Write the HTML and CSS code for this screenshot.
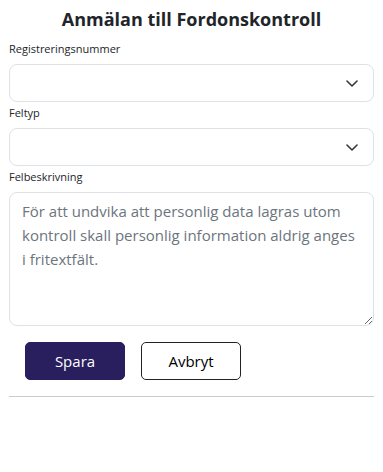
FILE: index.html
```html
<!DOCTYPE html>
<html lang="sv">
<head>
  <meta charset="UTF-8">
  <meta name="viewport" content="width=device-width, initial-scale=1.0">
  <title>Anmälan till Fordonskontroll</title>
  <link rel="stylesheet" href="styles.css">
</head>
<body>
  <form class="report-form">
    <h1>Anmälan till Fordonskontroll</h1>

    <label for="regnr">Registreringsnummer</label>
    <div class="select-wrap">
      <select id="regnr"><option></option></select>
      <svg class="chevron" viewBox="0 0 12 7" width="12" height="7"><path d="M1 1l5 5 5-5" fill="none" stroke="#343a40" stroke-width="1.6" stroke-linecap="round" stroke-linejoin="round"/></svg>
    </div>

    <label for="feltyp">Feltyp</label>
    <div class="select-wrap">
      <select id="feltyp"><option></option></select>
      <svg class="chevron" viewBox="0 0 12 7" width="12" height="7"><path d="M1 1l5 5 5-5" fill="none" stroke="#343a40" stroke-width="1.6" stroke-linecap="round" stroke-linejoin="round"/></svg>
    </div>

    <label for="beskrivning">Felbeskrivning</label>
    <textarea id="beskrivning" placeholder="För att undvika att personlig data lagras utom kontroll skall personlig information aldrig anges i fritextfält."></textarea>

    <div class="actions">
      <button type="button" class="btn btn-primary">Spara</button>
      <button type="button" class="btn btn-outline">Avbryt</button>
    </div>

    <hr>
  </form>
</body>
</html>
```

FILE: styles.css
```css
:root {
  --primary: #291e5e;
  --border: #dee2e6;
  --text: #212529;
  --muted: #6c757d;
}

* {
  box-sizing: border-box;
}

body {
  margin: 0;
  padding: 7px 9px;
  font-family: 'Open Sans', 'Noto Sans', sans-serif;
  color: var(--text);
  background: #fff;
}

.report-form {
  display: flex;
  flex-direction: column;
}

h1 {
  margin: 0 0 10px;
  font-size: 18px;
  line-height: 24px;
  font-weight: 700;
  text-align: center;
}

label {
  font-size: 11px;
  line-height: 16px;
  margin-bottom: 7px;
}

.select-wrap {
  position: relative;
  margin-bottom: 3px;
}

select {
  display: block;
  width: 100%;
  height: 38px;
  border: 1px solid var(--border);
  border-radius: 8px;
  background: #fff;
  appearance: none;
  -webkit-appearance: none;
  font: inherit;
}

.chevron {
  position: absolute;
  right: 16px;
  top: 16px;
  pointer-events: none;
}

textarea {
  display: block;
  width: 100%;
  height: 134px;
  padding: 6px 12px;
  border: 1px solid var(--border);
  border-radius: 8px;
  font-family: inherit;
  font-size: 15px;
  line-height: 24px;
  color: var(--text);
}

textarea::placeholder {
  color: var(--muted);
  opacity: 1;
}

.actions {
  display: flex;
  gap: 16px;
  padding: 16px 16px 0;
}

.btn {
  width: 100px;
  height: 38px;
  border-radius: 5px;
  font-family: inherit;
  font-size: 15px;
  cursor: pointer;
}

.btn-primary {
  background: var(--primary);
  border: 1px solid var(--primary);
  color: #fff;
}

.btn-outline {
  background: #fff;
  border: 1px solid #222;
  color: #000;
}

hr {
  width: 100%;
  margin: 16px 0 0;
  border: 0;
  border-top: 1px solid #ccc;
}
```
